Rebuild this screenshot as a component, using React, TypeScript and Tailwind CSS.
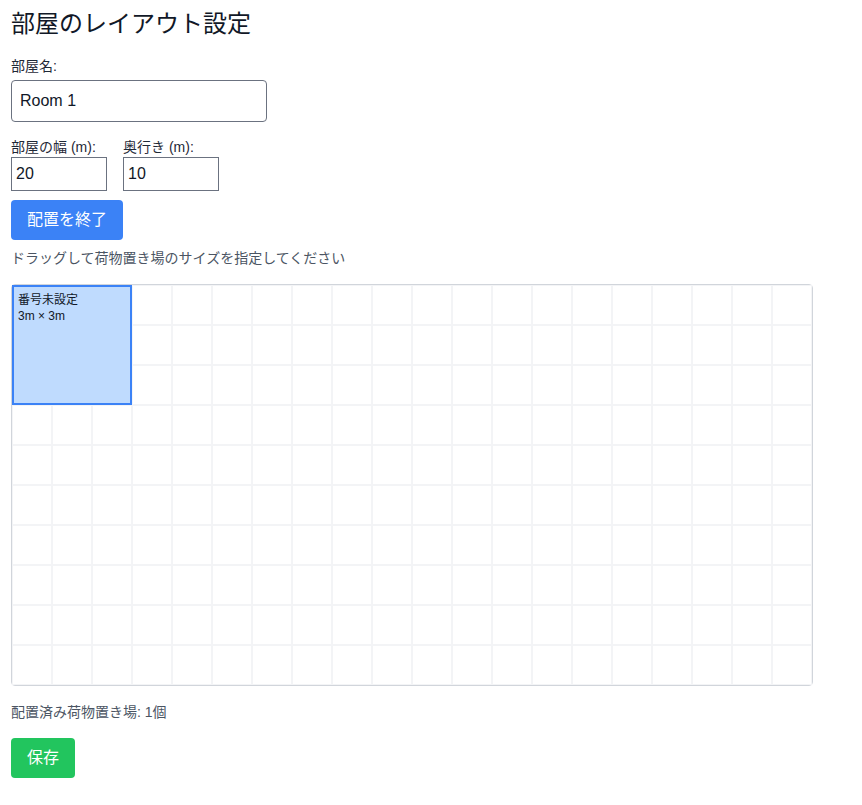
import React from "react";

export default function App() {
  const cols = 20;
  const rows = 10;
  const cells = Array.from({ length: cols * rows });
  return (
    <div
      className="px-[11px] pt-[8px] pb-6 text-[#111827] bg-white min-h-[805px]"
      style={{ fontFamily: '"Liberation Sans", "Noto Sans CJK JP", sans-serif' }}
    >
      <h1 className="text-2xl leading-8 mb-4">部屋のレイアウト設定</h1>
      <div className="mb-4">
        <label className="block text-sm leading-5 text-[#1f2937] mb-1">部屋名:</label>
        <input
          className="w-64 h-[42px] px-2 text-base border border-[#6b7280] rounded"
          defaultValue="Room 1"
        />
      </div>
      <div className="flex gap-4">
        <div className="w-24">
          <label className="block text-sm leading-[19px] text-[#1f2937]">部屋の幅 (m):</label>
          <input className="w-24 h-[34px] px-1 text-base border border-[#6b7280]" defaultValue="20" />
        </div>
        <div className="w-24">
          <label className="block text-sm leading-[19px] text-[#1f2937] whitespace-nowrap">奥行き (m):</label>
          <input className="w-24 h-[34px] px-1 text-base border border-[#6b7280]" defaultValue="10" />
        </div>
      </div>
      <button className="mt-[9px] h-10 px-4 bg-[#3b82f6] text-white text-base rounded">配置を終了</button>
      <p className="mt-2 text-sm leading-5 text-[#4b5563]">ドラッグして荷物置き場のサイズを指定してください</p>
      <div className="mt-4 relative w-[802px] border border-[#d1d5db] rounded-sm">
        <div className="grid grid-cols-[repeat(20,40px)] grid-rows-[repeat(10,40px)]">
          {cells.map((_, i) => (
            <div key={i} className="border border-[#f3f4f6]" />
          ))}
        </div>
        <div className="absolute left-0 top-0 w-[120px] h-[120px] bg-[#bfdbfe] border-2 border-[#3b82f6] px-1 pt-[5px] text-xs leading-4 text-[#111827]">
          <div>番号未設定</div>
          <div>3m × 3m</div>
        </div>
      </div>
      <p className="mt-4 text-sm leading-5 text-[#4b5563]">配置済み荷物置き場: 1個</p>
      <button className="mt-4 h-10 px-4 bg-[#22c55e] text-white text-base rounded">保存</button>
    </div>
  );
}
